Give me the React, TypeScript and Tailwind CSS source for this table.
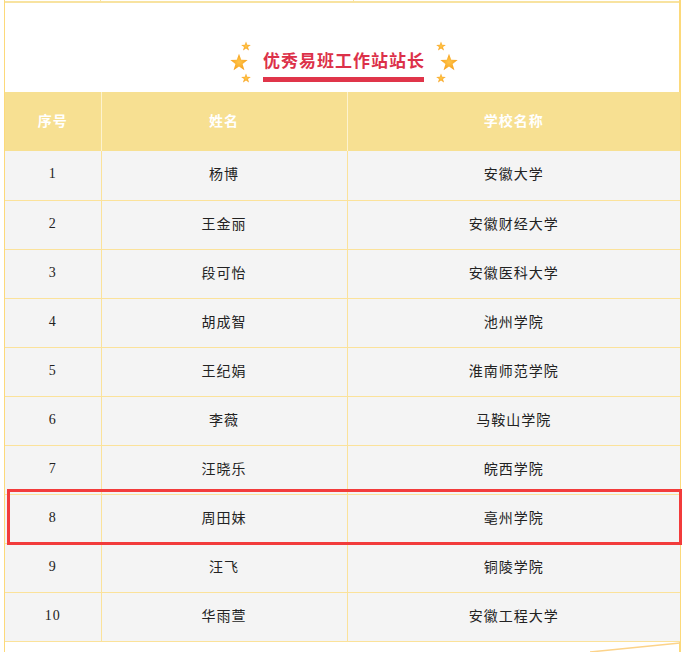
import React from 'react';

const rows = [
    { id: 1, name: '杨博', school: '安徽大学' },
    { id: 2, name: '王金丽', school: '安徽财经大学' },
    { id: 3, name: '段可怡', school: '安徽医科大学' },
    { id: 4, name: '胡成智', school: '池州学院' },
    { id: 5, name: '王纪娟', school: '淮南师范学院' },
    { id: 6, name: '李薇', school: '马鞍山学院' },
    { id: 7, name: '汪晓乐', school: '皖西学院' },
    { id: 8, name: '周田妹', school: '亳州学院' },
    { id: 9, name: '汪飞', school: '铜陵学院' },
    { id: 10, name: '华雨萱', school: '安徽工程大学' },
];

const Star = ({ size }: { size: number }) => (
    <svg width={size} height={size} viewBox="0 0 24 24" className="block">
        <defs>
            <radialGradient id="sg" cx="50%" cy="50%" r="60%">
                <stop offset="0%" stopColor="#ffc54a" />
                <stop offset="100%" stopColor="#f59a16" />
            </radialGradient>
        </defs>
        <polygon points="12,1 15,9 23.5,9.3 16.8,14.5 19.2,23 12,18 4.8,23 7.2,14.5 0.5,9.3 9,9" fill="url(#sg)" />
    </svg>
);

const StarGroup = ({ flip }: { flip?: boolean }) => (
    <div className={`flex flex-col h-[42px] justify-between ${flip ? 'items-start' : 'items-end'}`}>
        <Star size={10} />
        <div className={flip ? 'ml-[4px]' : 'mr-[3px]'}><Star size={18} /></div>
        <Star size={10} />
    </div>
);

const App: React.FC = () => {
    return (
        <div className="w-[684px] h-[652px] bg-white relative overflow-hidden" style={{ fontFamily: '"Noto Sans CJK SC", "Noto Sans", sans-serif' }}>
            <div className="ml-[4px] w-[677px] h-[652px] border-l border-r-2 border-[#fcd97a] flex flex-col">
                {/* leftover row from previous table */}
                <div className="flex h-[3px] border-b-2 border-[#f8e3a0]">
                    <div className="w-[96px] border-r border-[#f8e3a0]" />
                    <div className="w-[253px] border-r border-[#f8e3a0]" />
                    <div className="flex-1" />
                </div>

                {/* title */}
                <div className="h-[89px] flex justify-center items-start pt-[38px]">
                    <div className="flex items-start gap-[11px] pl-[4px]">
                        <StarGroup />
                        <div className="flex flex-col items-center mt-[7px]">
                            <div className="text-[17px] leading-[24px] font-bold tracking-[1px] text-[#dc3149] pl-[1px]">优秀易班工作站站长</div>
                            <div className="mt-[5px] w-[161px] h-[5px] bg-[#e0354a]" />
                        </div>
                        <StarGroup flip />
                    </div>
                </div>

                {/* table */}
                <table className="w-[675px] border-collapse table-fixed text-center">
                    <colgroup>
                        <col className="w-[96px]" />
                        <col className="w-[246px]" />
                        <col />
                    </colgroup>
                    <thead>
                        <tr className="bg-[#f7e092] h-[59px] text-white text-[14px] font-bold tracking-[1px]">
                            <th className="border-r border-[#fdf3cf] pb-[3px]">序号</th>
                            <th className="border-r border-[#fdf3cf] pb-[3px]">姓名</th>
                            <th className="pb-[3px]">学校名称</th>
                        </tr>
                    </thead>
                    <tbody>
                        {rows.map(r => (
                            <tr key={r.id} className="bg-[#f4f4f4] h-[49px] text-[14px] text-[#222] border-b border-[#fbe29a]">
                                <td className="border-r border-[#fbe29a] tracking-[1px] pb-[3px]" style={{ fontFamily: '"Liberation Serif", serif' }}>{r.id}</td>
                                <td className="border-r border-[#fbe29a] tracking-[1px] pb-[3px]">{r.name}</td>
                                <td className="tracking-[1px] pb-[3px]">{r.school}</td>
                            </tr>
                        ))}
                    </tbody>
                </table>
            </div>

            {/* highlight box */}
            <div className="absolute left-[7px] top-[489px] w-[675px] h-[56px] border-[3px] border-[#f23b3b]" />

            {/* bottom decoration */}
            <svg className="absolute left-[580px] top-[640px]" width="104" height="12" viewBox="0 0 104 12">
                <line x1="10" y1="12" x2="100" y2="3" stroke="#fcd38a" strokeWidth="1.5" />
            </svg>
        </div>
    );
};

export default App;
